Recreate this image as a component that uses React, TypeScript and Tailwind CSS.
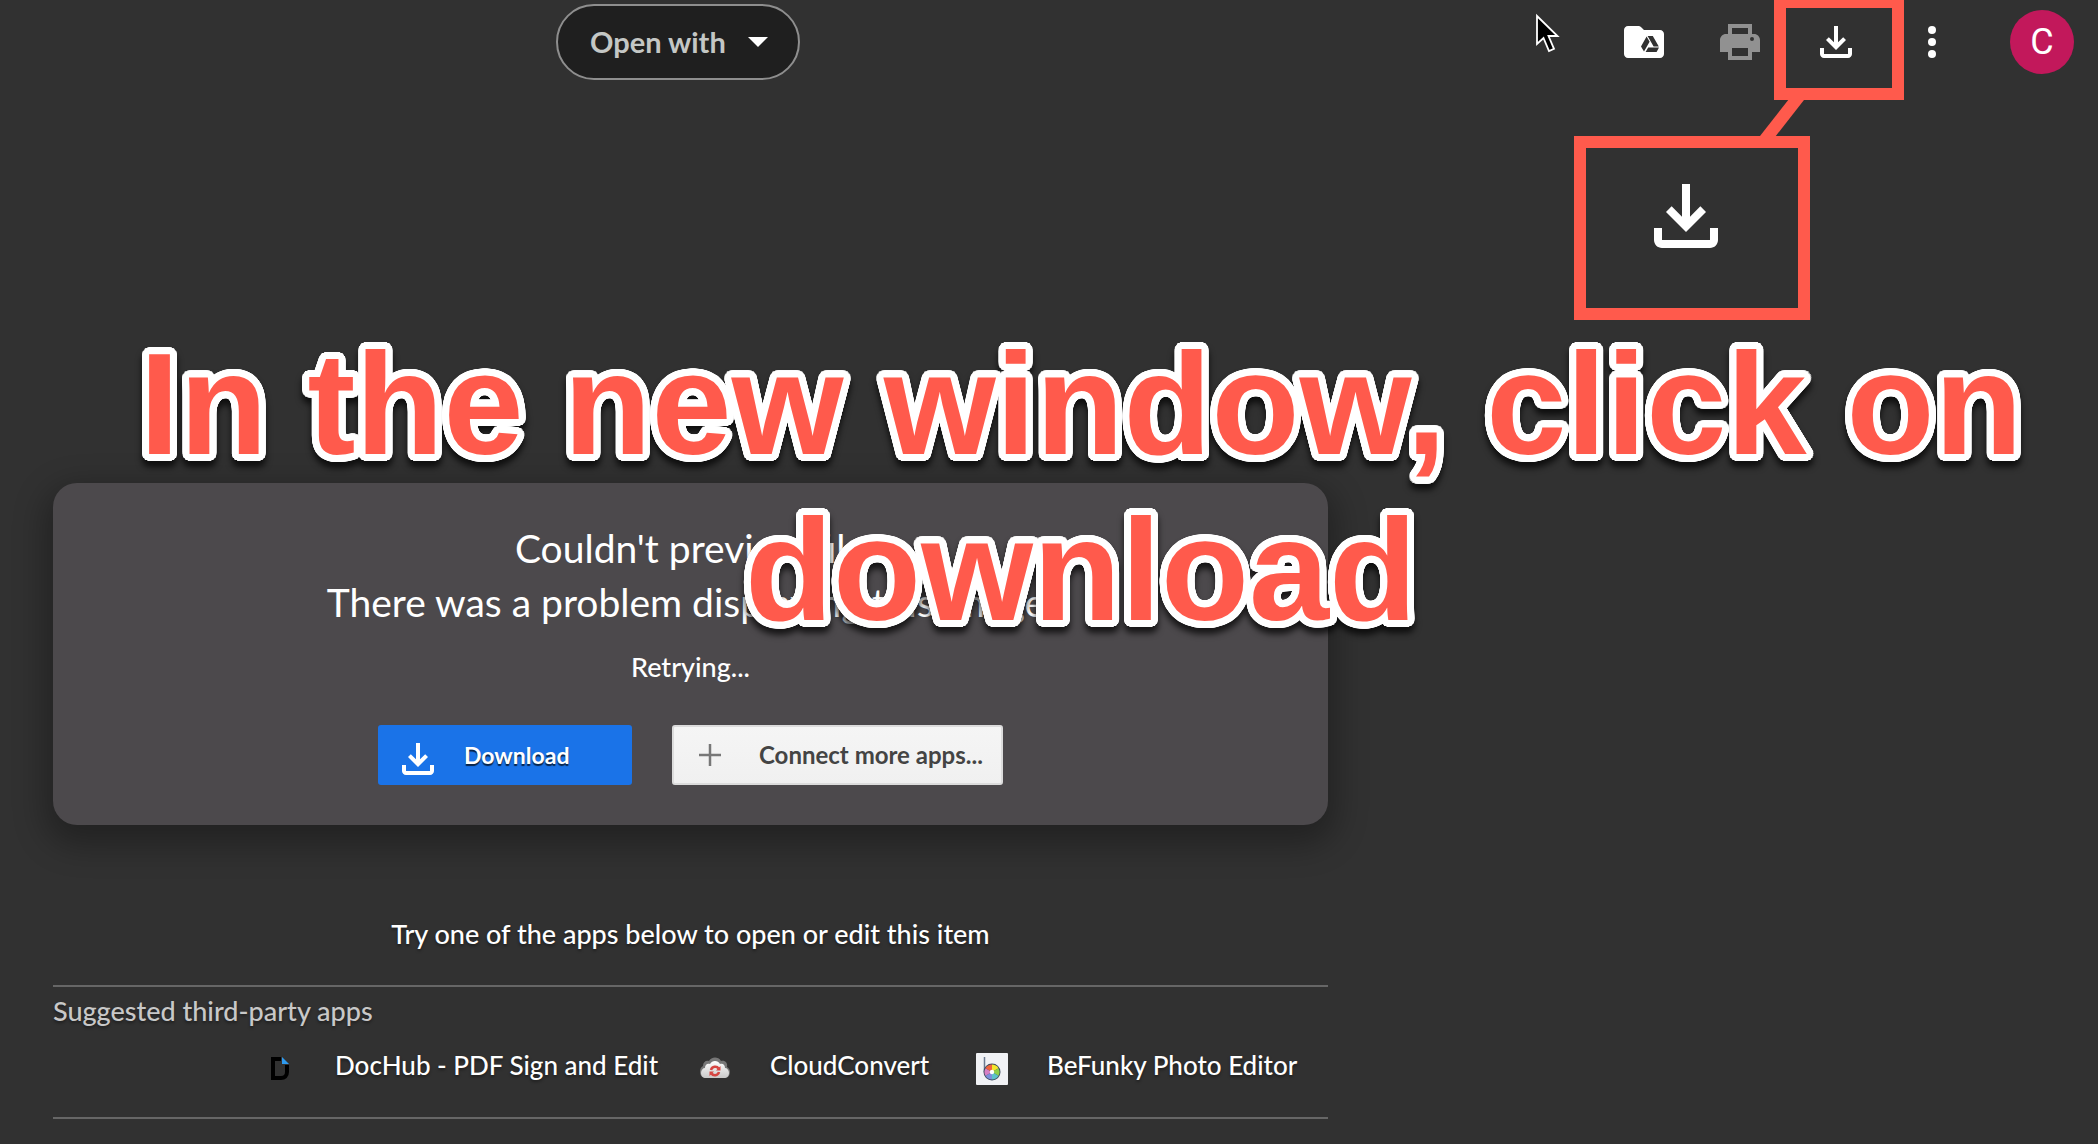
import React from 'react';

/** Tray with an arrow, used in the toolbar, the callout and the Download button. */
function DownloadIcon({ className }: { className: string }) {
    return (
        <svg className={className} viewBox="0 0 24 24" fill="currentColor" aria-hidden="true">
            <path d="M4 15h2v3h12v-3h2v3c0 1.1-.9 2-2 2H6c-1.1 0-2-.9-2-2v-3z" />
            <path d="M11 4h2v8.17l2.59-2.58L17 11l-5 5-5-5 1.41-1.41L11 12.17V4z" />
        </svg>
    );
}

function DriveFolderIcon() {
    return (
        <svg className="size-12" viewBox="0 0 24 24" aria-hidden="true">
            <path fill="#fff" d="M4 4h5.2c.5 0 1 .2 1.4.6L12 6h8c1.1 0 2 .9 2 2v10c0 1.100-.9 2-2 2H4c-1.100 0-2-.9-2-2V6c0-1.100.9-2 2-2z" />
            <path fill="#313131" d="M13.3 9.3 10.5 14.2 12 16.8 14.8 11.9zM13.8 9h2.6l3 5.2h-2.6zM14.1 14.7h5.4L18.3 17h-5.5z" />
        </svg>
    );
}

function PrintIcon() {
    return (
        <svg className="size-12" viewBox="0 0 24 24" fill="#919191" fillRule="evenodd" aria-hidden="true">
            <path d="M18 8h1c1.66 0 3 1.34 3 3v6h-4v4H6v-4H2v-6c0-1.66 1.34-3 3-3h1V3h12v5zM8 5v3h8V5H8zm0 10v4h8v-4H8zm10-3.5a1 1 0 1 0 0-2 1 1 0 0 0 0 2z" />
        </svg>
    );
}

function MoreIcon() {
    return (
        <svg className="size-12" viewBox="0 0 24 24" fill="#fff" aria-hidden="true">
            <circle cx="12" cy="6" r="2" />
            <circle cx="12" cy="12" r="2" />
            <circle cx="12" cy="18" r="2" />
        </svg>
    );
}

function DocHubIcon() {
    return (
        <svg className="size-8" viewBox="0 0 32 32" aria-hidden="true">
            <path fill="none" stroke="#000" strokeWidth="4" d="M17 6H9v19h8c3.500 0 6-2 6-6v-7" />
            <path fill="#2f9bf0" d="M18 4l7 7h-7z" />
        </svg>
    );
}

function CloudConvertIcon() {
    return (
        <svg className="size-8" viewBox="0 0 32 32" aria-hidden="true">
            <defs>
                <linearGradient id="cloud" x1="0" y1="0" x2="0" y2="1">
                    <stop offset="0" stopColor="#fff" />
                    <stop offset="1" stopColor="#c9c9c9" />
                </linearGradient>
            </defs>
            <path fill="#777" d="M7 25c-4 0-6-3-6-6 0-3 1-5 3-6 0-4 3-6 6-5 2-4 9-5 12 0 4-1 7 2 6 6 2 1 3 3 3 5 0 3-2 6-5 6z" />
            <path fill="url(#cloud)" d="M7 25c-3 0-5-2-5-5s2-5 4-5c0-3 2-5 5-4 2-4 8-4 10 0 3-1 5 1 5 4 2 0 4 2 4 5s-2 5-5 5z" />
            <path fill="none" stroke="#d64541" strokeWidth="2.500" d="M12 17c1-4 6-4 7.500-1.500M20 19c-1 4-6 4-7.500 1.500" />
            <path fill="#d64541" d="M21.500 13v4.500H17zM10.500 23v-4.500H15z" />
        </svg>
    );
}

function BeFunkyIcon() {
    return (
        <svg className="size-8" viewBox="0 0 32 32" aria-hidden="true">
            <rect width="32" height="32" rx="1" fill="#f1f2f5" />
            <path d="M8.500 4v15" stroke="#6b7a90" strokeWidth="1.500" />
            <circle cx="16" cy="19" r="8.500" fill="#3c4a5e" />
            <g transform="translate(16 19)">
                <path fill="#f4e62c" d="M0 0V-7.500A7.500 7.500 0 0 1 6.500-3.750z" />
                <path fill="#8fd14a" d="M0 0 6.500-3.750A7.500 7.500 0 0 1 6.500 3.750z" />
                <path fill="#5cc3c9" d="M0 0 6.500 3.750A7.500 7.500 0 0 1 0 7.500z" />
                <path fill="#7c8fdc" d="M0 0V7.500A7.500 7.500 0 0 1-6.500 3.750z" />
                <path fill="#d77fc4" d="M0 0-6.500 3.750A7.500 7.500 0 0 1-6.500-3.750z" />
                <path fill="#f0643c" d="M0 0-6.500-3.750A7.500 7.500 0 0 1 0-7.500z" />
                <circle r="2.200" fill="#fff" />
            </g>
        </svg>
    );
}

const APPS = [
    { name: 'DocHub - PDF Sign and Edit', icon: <DocHubIcon /> },
    { name: 'CloudConvert', icon: <CloudConvertIcon /> },
    { name: 'BeFunky Photo Editor', icon: <BeFunkyIcon /> },
];

// White outline with round corners: a ring of hard shadows. text-stroke only gives mitred ones.
const OUTLINE_STEPS = 48;
const OUTLINE_RADIUS = 7;
const captionOutline = Array.from({ length: OUTLINE_STEPS }, (_, i) => {
    const angle = (i / OUTLINE_STEPS) * Math.PI * 2;
    const x = (Math.cos(angle) * OUTLINE_RADIUS).toFixed(2);
    const y = (Math.sin(angle) * OUTLINE_RADIUS).toFixed(2);
    return `${x}px ${y}px 0 #fff`;
}).join(', ');

function Toolbar() {
    return (
        <header className="flex h-[84px] items-center justify-between pl-[556px] pr-6">
            <button className="flex h-[76px] w-[244px] items-center gap-[22px] rounded-full border-2 border-[#8e8e8e] bg-[#1f1f1f] pl-8 text-[29px] font-bold text-[#c4c7c5]">
                Open with
                <svg className="h-[10px] w-5" viewBox="0 0 20 10" fill="#fff" aria-hidden="true">
                    <path d="M0 0h20L10 10z" />
                </svg>
            </button>

            <div className="flex items-center gap-12 text-white">
                <button aria-label="Organize"><DriveFolderIcon /></button>
                <button aria-label="Print"><PrintIcon /></button>
                <button aria-label="Download"><DownloadIcon className="size-12" /></button>
                <button aria-label="More actions"><MoreIcon /></button>
                <button className="ml-[6px] size-16 rounded-full bg-[#c2185b] font-[Roboto,sans-serif] text-[36px] leading-none">
                    C
                </button>
            </div>
        </header>
    );
}

function PreviewError() {
    return (
        <section className="rounded-3xl bg-[#4c494c] pb-10 pt-[38px] text-center shadow-[0_12px_32px_8px_rgba(0,0,0,0.3)]">
            <p className="text-[39px] leading-[54px]">Couldn't preview file</p>
            <p className="text-[39px] leading-[54px]">There was a problem displaying this image.</p>
            <p className="mt-[18px] text-[27px] font-medium leading-10">Retrying...</p>
            <div className="mt-[38px] flex justify-center gap-10 font-bold">
                <button className="flex h-[60px] w-[254px] items-center gap-[22px] rounded-[3px] bg-[#1a73e8] pl-4 text-[23px] [text-shadow:0_2px_1px_rgba(0,0,0,0.7)]">
                    <DownloadIcon className="mt-2 size-12" />
                    Download
                </button>
                <button className="flex h-[60px] w-[331px] items-center gap-[38px] rounded-[3px] border-2 border-[#dcdcdc] bg-linear-to-b from-[#f5f5f5] to-[#f0f0f0] pl-[25px] text-2xl text-[#444]">
                    <svg className="size-[22px]" viewBox="0 0 22 22" stroke="#777" strokeWidth="2.500" aria-hidden="true">
                        <path d="M11 0v22M0 11h22" />
                    </svg>
                    Connect more apps...
                </button>
            </div>
        </section>
    );
}

function SuggestedApps() {
    return (
        <section className="mt-[89px] text-[27px] font-medium leading-10 [text-shadow:0_2px_3px_rgba(0,0,0,0.4)]">
            <p className="text-center">Try one of the apps below to open or edit this item</p>
            <div className="mt-[31px] border-y-2 border-[#666] pb-8 pt-1">
                <h2 className="text-[#c8c8c8]">Suggested third-party apps</h2>
                <ul className="mt-[14px] grid grid-cols-[435px_277px_auto] pl-[211px] text-[26px]">
                    {APPS.map((app) => (
                        <li key={app.name}>
                            <a href="#" className="flex items-center gap-[39px] whitespace-nowrap">
                                <span className="mt-2">{app.icon}</span>
                                {app.name}
                            </a>
                        </li>
                    ))}
                </ul>
            </div>
        </section>
    );
}

/** Tutorial markup that floats over the viewer: frames, connector, pointer, caption. */
function Annotations() {
    return (
        <div className="pointer-events-none">
            <svg className="absolute right-[534px] top-3 h-[44px] w-[30px]" viewBox="-2 -2 30 44" aria-hidden="true">
                <path
                    d="M1 2v28l6.500-6 5.500 13 5-2.200-5.500-12.800h9z"
                    fill="#000" stroke="#fff" strokeWidth="1.800"
                />
            </svg>
            <div className="absolute right-[194px] top-0 h-[100px] w-[130px] border-x-12 border-b-12 border-t-8 border-[#ff5a4c]" />
            <svg className="absolute right-[294px] top-[99px] h-[38px] w-[44px]" viewBox="0 0 44 38" fill="#ff5a4c" aria-hidden="true">
                <path d="M29 0h15v1L15 38H0v-1z" />
            </svg>
            <div className="absolute right-[288px] top-[136px] flex h-[184px] w-[236px] justify-center border-12 border-[#ff5a4c] pt-5 text-white">
                <DownloadIcon className="mr-3 size-24" />
            </div>
            <h1
                className="absolute inset-x-0 top-[322px] pl-16 text-center font-['Liberation_Sans',sans-serif] text-[144px] font-bold leading-[166px] text-[#ff5a4c] drop-shadow-[0_6px_3px_rgba(0,0,0,0.7)]"
                style={{ textShadow: captionOutline }}
            >
                In the new window, click on download
            </h1>
        </div>
    );
}

export default function App() {
    return (
        <div className="relative min-h-screen overflow-hidden bg-[#313131] font-[Lato,sans-serif] text-white">
            <Toolbar />
            <main className="mt-[399px] w-[1328px] max-w-full pl-[53px]">
                <PreviewError />
                <SuggestedApps />
            </main>
            <Annotations />
        </div>
    );
}
